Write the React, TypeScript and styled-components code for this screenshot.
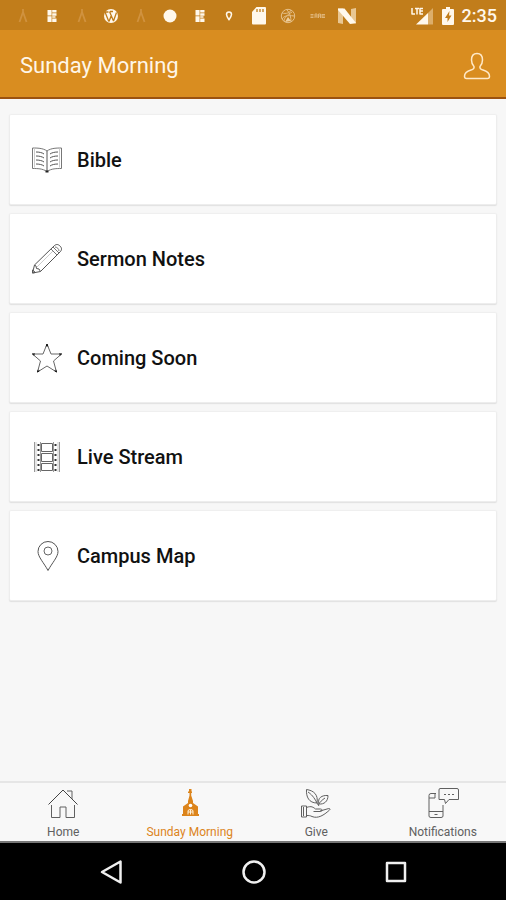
import React from "react";
import styled, { createGlobalStyle } from "styled-components";

const GlobalStyle = createGlobalStyle`
  * { box-sizing: border-box; }
  body {
    margin: 0;
    background: #f7f7f7;
    font-family: Roboto, "Liberation Sans", sans-serif;
  }
  button, a { font-family: inherit; }
`;

const Screen = styled.div`
  display: flex;
  flex-direction: column;
  min-height: 100vh;
`;

const StatusBar = styled.div`
  display: flex;
  align-items: center;
  justify-content: space-between;
  height: 30px;
  padding: 2px 9px 0 8px;
  background: #c17d1b;
  color: #fff8ec;
`;

const StatusIcons = styled.div`
  display: grid;
  grid-template-columns: repeat(12, 1fr);
  flex: 0 1 354px;
  align-items: center;
  justify-items: center;
`;

const SystemIcons = styled.div`
  display: flex;
  align-items: center;
  gap: 8px;
`;

const Clock = styled.time`
  font-size: 18px;
  font-weight: 500;
  line-height: 20px;
`;

const Header = styled.header`
  display: flex;
  align-items: center;
  justify-content: space-between;
  height: 69px;
  padding: 4px 15px 0 20px;
  background: #d98d20;
  border-bottom: 2px solid #9b5210;
`;

const Title = styled.h1`
  margin: 0;
  color: #fff6e8;
  font-size: 22px;
  font-weight: 400;
  line-height: 28px;
`;

const IconButton = styled.button`
  display: flex;
  padding: 0;
  border: 0;
  background: none;
  color: #ffe9c8;
  cursor: pointer;
`;

const CardList = styled.main`
  display: flex;
  flex: 1;
  flex-direction: column;
  gap: 10px;
  padding: 16px 10px;
`;

const Card = styled.button`
  display: flex;
  align-items: center;
  gap: 14px;
  height: 89px;
  padding: 0 21px;
  border: 0;
  border-radius: 1px;
  background: #fff;
  box-shadow: 0 0 1px 1px #efefef, 0 1px 1px 1px #dedede;
  color: #111;
  font-size: 20px;
  font-weight: 500;
  line-height: 24px;
  text-align: left;
  cursor: pointer;
`;

const TabBar = styled.nav`
  display: grid;
  grid-template-columns: repeat(4, 1fr);
  height: 62px;
  border-top: 2px solid #e6e6e6;
  border-bottom: 2px solid #777;
  background: #f8f8f8;
`;

const Tab = styled.a<{ $active?: boolean }>`
  display: flex;
  flex-direction: column;
  align-items: center;
  gap: 5px;
  padding-top: 4px;
  color: ${(p) => (p.$active ? "#dc841b" : "#606060")};
  font-size: 12px;
  line-height: 16px;
  text-decoration: none;
  white-space: nowrap;
`;

const SystemNav = styled.nav`
  display: flex;
  align-items: center;
  justify-content: space-between;
  height: 57px;
  padding: 0 97px 0 98px;
  background: #000;
`;

const SystemButton = styled(IconButton)`
  color: #f0f0f0;
`;

type DrawingProps = { w: number; h: number; children: React.ReactNode; stroke?: number };

const Drawing = ({ w, h, children, stroke = 1 }: DrawingProps) => (
  <svg
    width={w}
    height={h}
    viewBox={`0 0 ${w} ${h}`}
    fill="none"
    stroke="currentColor"
    strokeWidth={stroke}
    strokeLinejoin="round"
    aria-hidden="true"
  >
    {children}
  </svg>
);

const Compass = () => (
  <Drawing w={18} h={18}>
    <path d="M9 2v5M9 5L5.500 15M9 5l3.500 10" stroke="#d0923f" strokeWidth="1.8" />
  </Drawing>
);

const Blocks = () => (
  <Drawing w={18} h={18}>
    <path
      d="M5 3h3.600v5.500H4.500V3zM9.200 3H13.500v2.500H9.200zM9.200 6.200H13.500v2.500H9.200zM4.500 9.200h4.100V15H4.500zM9.200 9.200H12.500v1.600H9.200zM9.200 11.500H13.500V15H9.200z"
      fill="currentColor"
      stroke="none"
    />
  </Drawing>
);

const Wordpress = () => (
  <Drawing w={18} h={18}>
    <circle cx="9" cy="9" r="7" fill="currentColor" stroke="none" />
    <path d="M3 5l3.800 9.500M7.500 4.500l4 9.500M9.500 8L7 14.500M14.500 5.500L11.500 14M2.500 5h4M8 4.500h3" stroke="#c17d1b" strokeWidth="1.300" />
  </Drawing>
);

const Disc = () => (
  <Drawing w={18} h={18}>
    <circle cx="9" cy="9" r="6.500" fill="currentColor" stroke="none" />
  </Drawing>
);

const SmallPin = () => (
  <Drawing w={18} h={18}>
    <path d="M9 12.800C7.500 10.500 6.500 9 6.500 7.500a2.500 2.500 0 015 0C11.500 9 10.500 10.500 9 12.800z" strokeWidth="1.500" />
  </Drawing>
);

const SdCard = () => (
  <Drawing w={18} h={20}>
    <path d="M6.500 1H15q1 0 1 1v15.500q0 1-1 1H3q-1 0-1-1V6z" fill="currentColor" stroke="none" />
    <path d="M7 3v3M10 3v3M13 3v3" stroke="#c17d1b" strokeWidth="1.300" />
  </Drawing>
);

const Ball = () => (
  <Drawing w={18} h={18}>
    <g stroke="#e6c18a">
      <circle cx="9" cy="9" r="6.700" />
      <path d="M3 6c4 1 8 0 9-3M3 12c2-3 5-4 12-3M8 3c3 3 4 7 4 12M5 14c0-3 3-6 8-9" />
      <path d="M9 10l3 4-6 1z" fill="#efcf9e" stroke="none" />
    </g>
  </Drawing>
);

const Mark = () => (
  <Drawing w={18} h={18}>
    <path d="M1.500 7.500h3M1.500 9h3M1.500 10.500h3M6 11V7h2v4M6 9h2M9.500 11V7h2v4M9.500 9h2M13 11V7M13 7.500h3M13 9h3M13 10.500h3" stroke="#dfb578" />
  </Drawing>
);

const Nougat = () => (
  <Drawing w={20} h={18}>
    <path d="M1 1.500h5V17l-5-1zM14 2l5-1v15.500h-5z" fill="#e9c793" stroke="none" />
    <path d="M1 1.500h6.500L19 16l-6 1L1 3z" fill="currentColor" stroke="none" />
  </Drawing>
);

const Signal = () => (
  <Drawing w={24} h={20}>
    <path d="M23 2v16.500h-5V7z" fill="#dcae6a" stroke="none" />
    <path d="M18 7v11.500H6z" fill="currentColor" stroke="none" />
    <path d="M2 2v6h3M5 2.500h4M7 2.500v6M13 2.500h-3V8h3M10 5h3" strokeWidth="1.500" />
  </Drawing>
);

const Battery = () => (
  <Drawing w={12} h={20}>
    <path d="M4 1h4v2h3q1 0 1 1v14q0 1-1 1H1q-1 0-1-1V4q0-1 1-1h3z" fill="currentColor" stroke="none" />
    <path d="M7.500 5L3 12h2.500v4L9.500 9.500H7z" fill="#c17d1b" stroke="none" />
  </Drawing>
);

const Person = () => (
  <Drawing w={28} h={28} stroke={1.5}>
    <path d="M14 1.500c-4 0-5.500 3-5.500 6.500 0 3 1 5 2.500 6.500.5 2-.5 2.800-3 3.500-4 1.200-6.500 2.700-6.500 6.200 0 1.500.5 2.300 2 2.300h21c1.500 0 2-.8 2-2.300 0-3.500-2.500-5-6.500-6.200-2.500-.7-3.500-1.500-3-3.500 1.500-1.500 2.500-3.500 2.500-6.500 0-3.500-1.500-6.500-5.500-6.500z" />
  </Drawing>
);

const Book = () => (
  <Drawing w={32} h={32}>
    <path d="M16 7C12 4 6 4 1.500 4v20.500c5 0 10 0 14.500 3 4.500-3 9.500-3 14.500-3V4C26 4 20 4 16 7z" stroke="#777" />
    <path d="M16 7v20" stroke="#555" />
    <path d="M3.500 5v18.500M28.500 5v18.500" stroke="#ccc" />
    <path d="M5 8c3 0 6 .5 8 2M5 12c3 0 6 .5 8 2M5 16c3 0 6 .5 8 2M5 20c3 0 6 .5 8 2M27 8c-3 0-6 .5-8 2M27 12c-3 0-6 .5-8 2M27 16c-3 0-6 .5-8 2M27 20c-3 0-6 .5-8 2" stroke="#555" />
    <path d="M14.500 26.500h3v2h-3z" fill="#222" stroke="none" />
  </Drawing>
);

const Pencil = () => (
  <Drawing w={32} h={32}>
    <path d="M1.500 30l2-8L23 3c2-2 4-2 6 0s2 4 0 6L9.500 28.500z" stroke="#555" />
    <path d="M3.500 22l1.500 1 .5 2.500 2.500.5 1.500 2.500M1.500 30v-3l3 2.500z" stroke="#555" />
    <path d="M20 6l6 6M22 4l6 6M24 4c2 0 4 2 4 4" stroke="#777" />
    <path d="M6 24L22 8" stroke="#ccc" />
  </Drawing>
);

const Star = () => (
  <Drawing w={32} h={32}>
    <path d="M16 2l4 10H30.500l-8 7 3 11-9.500-6L6.500 30l3-11-8-7H12z" stroke="#666" />
    <path d="M15.200 4.500L16 2l.8 2.500M4 12H1.500l1.800 1.500M28 12h2.500l-1.800 1.500M7.200 27.800L6.500 30l2-1.300M24.800 27.800l.7 2.200-2-1.300" stroke="#111" />
  </Drawing>
);

const Film = () => (
  <Drawing w={32} h={32}>
    <path d="M3.500 1v30M28.500 1v30M9.500 1v30M22.500 1v30" stroke="#999" />
    <path d="M5 1v30M27 1v30" stroke="#ccc" />
    <path d="M10.500 2.500h11v8h-11zM10.500 12.500h11v8h-11zM10.500 22.500h11v7h-11z" stroke="#666" />
    <path d="M7.500 3v28M24.500 3v28" stroke="#333" strokeWidth="2" strokeDasharray="2 3" />
  </Drawing>
);

const MapPin = () => (
  <Drawing w={32} h={32}>
    <path d="M17 30.500C13 23 7 17 7 11.500a10 10 0 0120 0C27 17 21 23 17 30.500z" stroke="#555" />
    <circle cx="17" cy="11" r="4" stroke="#666" />
  </Drawing>
);

const House = () => (
  <Drawing w={32} h={32}>
    <path d="M1.500 17.500L16 3l14.500 14.500" stroke="#444" />
    <path d="M4.500 18v12.500H13V20h6v10.500h8.500V18M20 4h5v8" />
  </Drawing>
);

const Church = () => (
  <Drawing w={32} h={32}>
    <path d="M15 2h2.500v2.500h.5v1.500h-.8v2.500l1.800 5.500v2l5 3.500V27h1v2H8v-2h1v-7.500l5-3.500v-2l1.500-5.500V6H14V4.500h1z" fill="currentColor" stroke="none" />
    <circle cx="16.500" cy="18.500" r="1.800" fill="#fff" stroke="none" />
    <path d="M14 27.500V24q0-1.500 2.500-1.500T19 24v3.500M16.500 22.500v5M14 25h5" stroke="#fff2dc" />
  </Drawing>
);

const Giving = () => (
  <Drawing w={32} h={32}>
    <path d="M1.500 19h5v11h-5zM6.500 20.500c5-2 7 0 9 1.500h5c2 0 2 2.500 0 2.500h-7M20 24l7-2c3-1 4 0 2 1.500C24 28 18 32 12 29.500c-2-1-3-1-5.500-1M3.500 20v9" />
    <path d="M17 16C9 16 6 10 6.500 2.500c7 1 12 5 10.500 13.500zM17 16C14 10 11 7 8 5M19 17c-2-6 3-9 9-8.500 0 6-4 9-9 8.500zM18 18c2-3 4-5 7-7M17 16l2 3" />
  </Drawing>
);

const PhoneChat = () => (
  <Drawing w={32} h={32}>
    <path d="M9 6.500H4q-2 0-2 2V29q0 1.500 2 1.500h10q2 0 2-1.500V18M2 24.500h14M2 11h6M8 6v5M7.500 27.500h3" />
    <path d="M13 1.500h17q1.500 0 1.500 1.500v9.500H22l-3.500 4-1-4H12V3q0-1.500 1-1.500zM17 7.500h2M21 7.500h2M25 7.500h2" />
  </Drawing>
);

const notices = [Compass, Blocks, Compass, Wordpress, Compass, Disc, Blocks, SmallPin, SdCard, Ball, Mark, Nougat];

const cards = [
  { label: "Bible", Icon: Book },
  { label: "Sermon Notes", Icon: Pencil },
  { label: "Coming Soon", Icon: Star },
  { label: "Live Stream", Icon: Film },
  { label: "Campus Map", Icon: MapPin },
];

const tabs = [
  { label: "Home", Icon: House },
  { label: "Sunday Morning", Icon: Church, active: true },
  { label: "Give", Icon: Giving },
  { label: "Notifications", Icon: PhoneChat },
];

export default function App() {
  return (
    <Screen>
      <GlobalStyle />
      <StatusBar>
        <StatusIcons>
          {notices.map((Icon, i) => (
            <Icon key={i} />
          ))}
        </StatusIcons>
        <SystemIcons>
          <Signal />
          <Battery />
          <Clock>2:35</Clock>
        </SystemIcons>
      </StatusBar>
      <Header>
        <Title>Sunday Morning</Title>
        <IconButton type="button" aria-label="Profile">
          <Person />
        </IconButton>
      </Header>
      <CardList>
        {cards.map(({ label, Icon }) => (
          <Card key={label} type="button">
            <Icon />
            {label}
          </Card>
        ))}
      </CardList>
      <TabBar>
        {tabs.map(({ label, Icon, active }) => (
          <Tab key={label} href="#" $active={active} aria-current={active ? "page" : undefined}>
            <Icon />
            {label}
          </Tab>
        ))}
      </TabBar>
      <SystemNav>
        <SystemButton type="button" aria-label="Back">
          <Drawing w={26} h={26} stroke={2.5}>
            <path d="M4 13L22.500 2.500v21z" />
          </Drawing>
        </SystemButton>
        <SystemButton type="button" aria-label="Home screen">
          <Drawing w={26} h={26} stroke={2.5}>
            <circle cx="13" cy="13" r="10.500" />
          </Drawing>
        </SystemButton>
        <SystemButton type="button" aria-label="Recent apps">
          <Drawing w={26} h={26} stroke={2.5}>
            <path d="M4 4h18v18H4z" />
          </Drawing>
        </SystemButton>
      </SystemNav>
    </Screen>
  );
}
